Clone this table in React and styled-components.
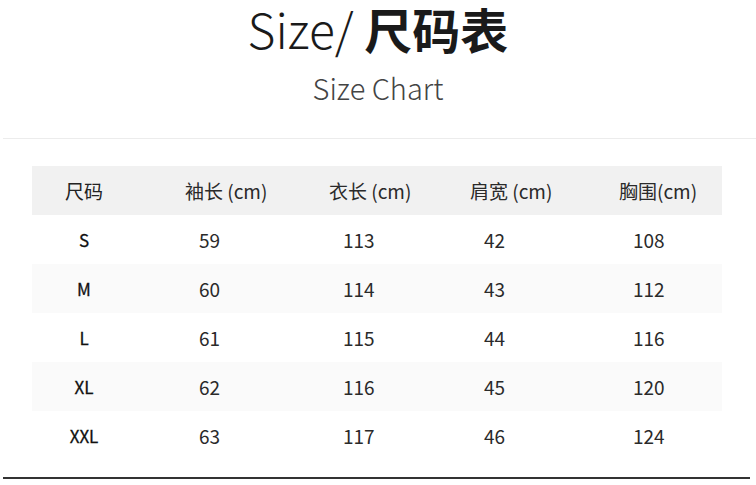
import React from "react";
import styled, { createGlobalStyle } from "styled-components";

const Global = createGlobalStyle`
  html, body { margin: 0; padding: 0; background: #fff; }
  body { font-family: "Noto Sans CJK SC", "Noto Sans", sans-serif; color: #222; }
`;

const Page = styled.div`
  width: 756px;
  height: 485px;
  display: flex;
  flex-direction: column;
`;

const Title = styled.h1`
  margin: 0;
  text-align: center;
  font-size: 48px;
  line-height: 56px;
  font-weight: 200;
  color: #1a1a1a;
`;

const Bold = styled.span`
  font-weight: 700;
`;

const Subtitle = styled.div`
  margin-top: 13px;
  text-align: center;
  font-size: 29px;
  line-height: 36px;
  font-weight: 200;
  color: #444;
`;

const Divider = styled.div`
  margin: 33px 0 0 3px;
  height: 1px;
  background: #ececec;
`;

const Table = styled.div`
  margin: 27px 34px 0 32px;
  display: flex;
  flex-direction: column;
`;

const Row = styled.div`
  display: grid;
  grid-template-columns: 104px 144px 141px 149px 1fr;
  height: 49px;
  align-items: center;
  background: ${(p) => (p.$head ? "#f1f1f1" : p.$alt ? "#fafafa" : "#fff")};
`;

const SizeCell = styled.div`
  text-align: center;
  font-size: ${(p) => (p.$head ? "19px" : "17px")};
  font-weight: 400;
  color: ${(p) => (p.$head ? "#222" : "#111")};
  -webkit-text-stroke: ${(p) => (p.$head ? "0" : "0.3px #111")};
`;

const Cell = styled.div`
  padding-left: ${(p) => (p.$head ? "49px" : "63px")};
  font-size: 19px;
  color: #2a2a2a;
  white-space: nowrap;
`;

const BottomLine = styled.div`
  margin: 17px 6px 0 3px;
  height: 2px;
  background: #333;
`;

const headers = ["袖长 (cm)", "衣长 (cm)", "肩宽 (cm)", "胸围(cm)"];
const rows = [
  ["S", 59, 113, 42, 108],
  ["M", 60, 114, 43, 112],
  ["L", 61, 115, 44, 116],
  ["XL", 62, 116, 45, 120],
  ["XXL", 63, 117, 46, 124],
];

export default function App() {
  return (
    <Page>
      <Global />
      <Title>
        Size/ <Bold>尺码表</Bold>
      </Title>
      <Subtitle>Size Chart</Subtitle>
      <Divider />
      <Table>
        <Row $head>
          <SizeCell $head>尺码</SizeCell>
          {headers.map((h) => (
            <Cell $head key={h}>{h}</Cell>
          ))}
        </Row>
        {rows.map((r, i) => (
          <Row key={r[0]} $alt={i % 2 === 1}>
            <SizeCell>{r[0]}</SizeCell>
            {r.slice(1).map((v, j) => (
              <Cell key={j}>{v}</Cell>
            ))}
          </Row>
        ))}
      </Table>
      <BottomLine />
    </Page>
  );
}
